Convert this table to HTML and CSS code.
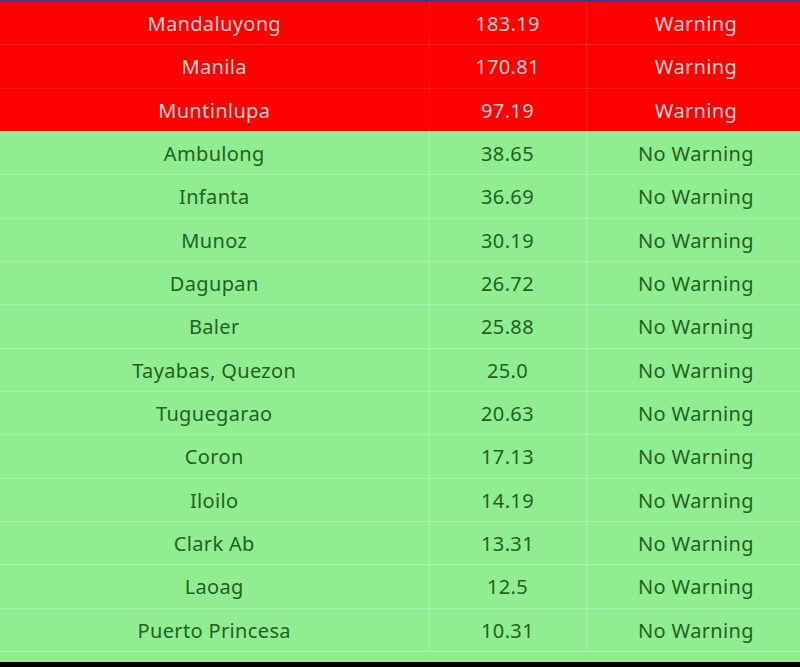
FILE: index.html
```html
<!DOCTYPE html>
<html>
<head>
<meta charset="utf-8">
<link rel="stylesheet" href="styles.css">
</head>
<body>
<div class="frame">
  <table class="stations">
    <colgroup>
      <col class="c-name"><col class="c-val"><col class="c-status">
    </colgroup>
    <tbody>
      <tr class="warn"><td>Mandaluyong</td><td>183.19</td><td>Warning</td></tr>
      <tr class="warn"><td>Manila</td><td>170.81</td><td>Warning</td></tr>
      <tr class="warn"><td>Muntinlupa</td><td>97.19</td><td>Warning</td></tr>
      <tr class="ok"><td>Ambulong</td><td>38.65</td><td>No Warning</td></tr>
      <tr class="ok"><td>Infanta</td><td>36.69</td><td>No Warning</td></tr>
      <tr class="ok"><td>Munoz</td><td>30.19</td><td>No Warning</td></tr>
      <tr class="ok"><td>Dagupan</td><td>26.72</td><td>No Warning</td></tr>
      <tr class="ok"><td>Baler</td><td>25.88</td><td>No Warning</td></tr>
      <tr class="ok"><td>Tayabas, Quezon</td><td>25.0</td><td>No Warning</td></tr>
      <tr class="ok"><td>Tuguegarao</td><td>20.63</td><td>No Warning</td></tr>
      <tr class="ok"><td>Coron</td><td>17.13</td><td>No Warning</td></tr>
      <tr class="ok"><td>Iloilo</td><td>14.19</td><td>No Warning</td></tr>
      <tr class="ok"><td>Clark Ab</td><td>13.31</td><td>No Warning</td></tr>
      <tr class="ok"><td>Laoag</td><td>12.5</td><td>No Warning</td></tr>
      <tr class="ok"><td>Puerto Princesa</td><td>10.31</td><td>No Warning</td></tr>
    </tbody>
  </table>
  <div class="tail"></div>
</div>
</body>
</html>
```
FILE: styles.css
```css
html, body {
  margin: 0;
  padding: 0;
  background: #000;
  overflow: hidden;
}
.frame {
  width: 806px;
  border-top: 2px solid #3a3a9c;
  background: #90ee90;
}
.stations {
  width: 806px;
  border-collapse: collapse;
  table-layout: fixed;
  font-family: "Noto Sans", sans-serif;
  font-size: 20px;
  letter-spacing: 0.35px;
}
.c-name { width: 429px; }
.c-val { width: 157px; }
.c-status { width: 220px; }
.stations td {
  height: 41.33px;
  padding: 1px 0 0;
  text-align: center;
  vertical-align: middle;
  border: 1px solid rgba(255,255,255,0.12);
  border-top: none;
  border-left: none;
}
.warn { background: #ff0000; color: #fad6d6; }
.ok { background: #90ee90; color: #236023; }
.ok td { border-color: rgba(255,255,255,0.22); border-top: none; border-left: none; }
.tail {
  height: 10px;
  background: #90ee90;
}
```
